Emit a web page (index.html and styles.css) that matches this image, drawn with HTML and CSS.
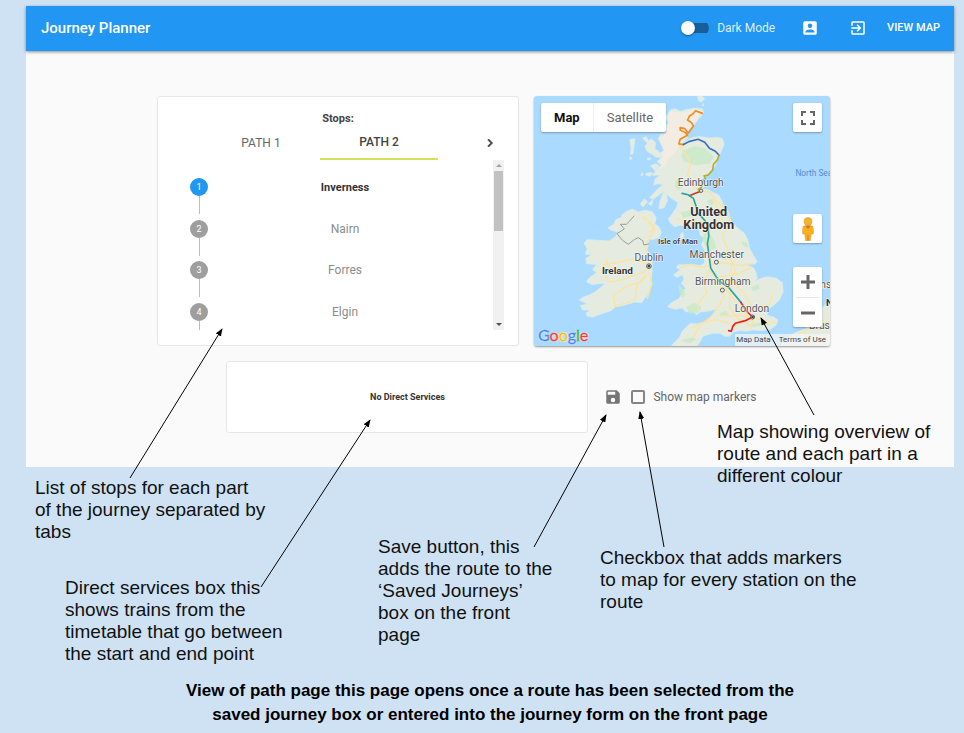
FILE: index.html
```html
<!DOCTYPE html>
<html lang="en">
<head>
<meta charset="utf-8">
<title>Journey Planner</title>
<link rel="stylesheet" href="styles.css">
</head>
<body>
<main class="board">
  <div class="app">
    <header class="bar">
      <h1 class="brand">Journey Planner</h1>
      <label class="dark"><input class="switch" type="checkbox" role="switch">Dark Mode</label>
      <button class="icon-btn" type="button" aria-label="Account">
        <svg viewBox="0 0 24 24" fill="currentColor"><path d="M3 5v14a2 2 0 0 0 2 2h14a2 2 0 0 0 2-2V5a2 2 0 0 0-2-2H5a2 2 0 0 0-2 2zm12 4a3 3 0 1 1-6 0 3 3 0 0 1 6 0zm-9 8c0-2 4-3.100 6-3.100s6 1.100 6 3.100v1H6v-1z"/></svg>
      </button>
      <button class="icon-btn" type="button" aria-label="Sign out">
        <svg viewBox="0 0 24 24" fill="currentColor"><path d="M10.090 15.590 11.500 17l5-5-5-5-1.410 1.410L12.670 11H3v2h9.670l-2.580 2.590zM19 3H5a2 2 0 0 0-2 2v4h2V5h14v14H5v-4H3v4a2 2 0 0 0 2 2h14a2 2 0 0 0 2-2V5a2 2 0 0 0-2-2z"/></svg>
      </button>
      <a class="view-map" href="#map">VIEW MAP</a>
    </header>

    <div class="row row-main">
      <section class="card stops">
        <h2 class="stops-title">Stops:</h2>
        <div class="tabs" role="tablist">
          <button class="tab" type="button" role="tab">PATH 1</button>
          <button class="tab active" type="button" role="tab" aria-selected="true">PATH 2</button>
          <button class="next" type="button" aria-label="Next tab">
            <svg viewBox="0 0 24 24" fill="currentColor" stroke="currentColor"><path d="M8.590 16.590 13.170 12 8.590 7.410 10 6l6 6-6 6z"/></svg>
          </button>
        </div>
        <div class="list-wrap">
          <ol class="list">
            <li class="stop current"><span class="num">1</span><span class="name">Inverness</span></li>
            <li class="stop"><span class="num">2</span><span class="name">Nairn</span></li>
            <li class="stop"><span class="num">3</span><span class="name">Forres</span></li>
            <li class="stop"><span class="num">4</span><span class="name">Elgin</span></li>
          </ol>
          <div class="scroll" aria-hidden="true"><i class="up"></i><i class="thumb"></i><i class="down"></i></div>
        </div>
      </section>

      <section class="map" id="map" aria-label="Route map">
        <svg class="map-art" viewBox="0 0 891 756" preserveAspectRatio="xMidYMid slice">
          <rect width="891" height="756" fill="#aadaff"/>
          <g fill="#e6ebe0" stroke="#d3eef2" stroke-width="2" stroke-linejoin="round">
            <path d="M410 44L425 40 440 48 460 42 484 38 506 40 512 52 500 66 488 80 474 98 460 112 462 128 446 146 462 134 480 126 500 124 530 128 552 126 568 130 572 148 562 172 554 190 546 212 530 232 514 246 498 256 476 262 500 262 520 262 516 272 500 284 520 282 540 292 556 300 566 318 576 350 590 378 612 398 634 416 644 436 650 462 662 484 672 500 664 508 636 508 660 518 668 532 672 550 664 560 684 550 704 546 730 550 748 564 750 590 740 614 724 630 708 642 690 650 704 654 700 662 720 666 734 676 730 690 712 704 686 708 660 706 640 710 620 708 600 712 590 724 576 726 560 716 540 716 524 720 508 726 500 742 490 756 412 756 426 740 438 728 446 710 458 698 470 686 490 688 512 682 524 676 540 656 548 644 520 650 500 652 490 660 476 650 458 652 446 640 424 644 402 636 416 622 436 612 448 592 456 580 444 566 452 552 446 540 430 548 420 540 440 524 428 518 434 510 452 510 474 508 500 512 514 504 512 488 516 470 504 450 512 430 500 420 496 402 476 396 458 396 440 390 424 396 410 384 404 372 416 356 428 338 434 322 420 314 408 306 398 296 402 316 392 338 376 342 378 322 384 304 392 288 376 300 360 312 348 308 362 292 376 278 390 268 372 266 360 270 364 252 380 240 356 240 372 220 384 210 370 200 384 186 376 176 390 166 384 150 374 130 380 118 398 114 394 96 404 82 396 66z"/>
            <path d="M264 360L280 348 296 342 312 350 336 346 356 350 368 368 364 386 376 396 384 412 378 426 360 434 346 434 344 452 340 466 350 480 356 500 356 520 354 546 352 572 346 596 332 612 324 624 304 622 284 628 262 634 246 636 232 648 214 654 196 660 176 668 160 664 156 656 168 646 146 646 140 632 160 628 136 616 150 606 168 600 186 590 200 578 214 568 200 566 174 570 158 560 168 548 188 534 176 524 188 510 158 506 156 490 172 480 154 478 160 460 150 446 160 434 196 436 226 438 246 424 252 412 232 406 222 398 240 388 246 374 264 366z"/>
            <path d="M326 128L338 124 346 138 352 130 366 142 364 162 376 168 384 186 368 186 354 176 340 168 334 152 342 144zM288 132L304 130 302 148 298 176 290 178 292 160zM288 186l6 0 0 6-6 0zM342 188l8 0 0 6-8 0zM350 212L366 206 378 212 364 228 358 218zM322 236l6-4 0 8-6 2zM334 238l10-6 14 2-10 10zM320 326L332 312 342 320 328 336zM344 326L358 314 354 332zM440 418L448 412 452 424 442 434zM492 4L502 0 510 6 514 10 504 20 496 16zM508 24l4 6-6 2z"/>
            <path d="M736 756L760 734 782 716 814 704 842 686 856 664 866 642 880 626 891 620V756zM864 570L891 560V576L864 582z"/>
          </g>
          <path fill="#f3ece2" d="M412 48L440 52 484 42 506 44 482 84 456 112 450 136 436 150 426 172 404 190 394 214 376 222 386 206 376 200 390 184 384 172 394 164 384 146 378 126 400 116 398 98 408 82 400 66z"/>
          <g fill="#c8e8c5" opacity=".8">
            <path d="M448 166l34-14 34 8 24 24-10 20-44 6-34-10-8-16zM426 256l18 4 4 16-14 10-10-12zM512 414l18 4 14 22 4 18-16 10-16-14-10-22zM458 636l24-12 22 12-10 18-26 4zM434 568l18 18 4 16-10 6-8-16zM555 480l16-10 14 12-10 14zM520 318l16-6 6 12-12 8zM440 352l34-6 8 14-32 8zM652 578l24-10 4 14-20 8zM558 656l20-8 8 12-20 6zM442 738l30-10 18 6-20 12zM636 690l60-8 16 8-50 6zM624 438l18 6 4 14-16-4z"/>
          </g>
          <g fill="none" stroke="#fce3a0" stroke-width="4" stroke-linejoin="round">
            <path d="M436 148l24 34 12 26-10 26 10 32 26 20 34 6 18 40 16 34 8 40-6 22 18 40 8 30 12 28-8 30-8 44-2 36 24 34 42 22M470 300l10 46 38 34 6 66 8 54-4 28 30 28 34 46 34 44 32 34M440 518l30-8 40 8 40-14 40 2 32 6 30-6M530 520l-18 40 8 34-26 32-2 24M560 570l12 34-14 28-20 30-36 28-24 40M560 664l50-2 44 6 76 18M594 510l0 50-18 30M594 560l40 36 24 44 50-10 10-30M474 700l40-16 36-10 60 20 44-26M546 550l70-14 40-20M660 670l-8 34M596 390l-12-40-42-40M430 372l30 4 48 4"/>
            <path d="M344 510l-8-50 10-30 14-20-8-26-26-20M340 505l-50-12-40 10-44 8 18 50 40-6 64-22 22-18M340 540l-18 22-44 12-38 28 4 32M340 540l-30 30-6 44-30 12-34 8M345 530l10 36-14 46M225 520l-10-30M344 412l18-6-2-16-18-6"/>
            <path d="M776 728l38-18 30-22 47-6M814 710l14 46M844 688l-4-36M860 650l-14 50"/>
          </g>
          <path d="M302 362l-14 16-10 10-18 0 12 14-22 14 16 20 18 12 18-14 12-6 14 10 2 12 12-2 4-2" fill="none" stroke="#9a9e9c" stroke-width="3"/>
          <g fill="none" stroke-width="5" stroke-linejoin="round" stroke-linecap="round">
            <path stroke="#f48c20" d="M507 54L486 46 478 56 468 62 462 74 474 82 480 92 464 114 454 100 440 97 440 104 456 112 462 120 440 132 436 146 450 148"/>
            <path stroke="#3671bd" d="M450 148l16-9 28-7 20 9 14 18 18 9 11 12"/>
            <path stroke="#b2b02c" d="M557 180L552 194 540 208 538 224 524 240 512 242 516 250 508 258 504 276 494 284"/>
            <path stroke="#c73d26" d="M500 289l-16 6-16 7"/>
            <path stroke="#2aa3a3" d="M446 295L464 299 480 310 488 334 492 352 514 376 524 392 526 424 522 446 532 520 556 558 586 578 623 623"/>
            <path stroke="#ee1c25" d="M623 623L638 648 658 667 636 678 606 686 598 696 594 710 586 708"/>
          </g>
          <g fill="#e7ebe4" stroke="#5d5d5d" stroke-width="3"><circle cx="503" cy="287" r="5"/><circle cx="549" cy="502" r="6"/><circle cx="567" cy="586" r="6"/><circle cx="346" cy="514" r="7"/><circle cx="658" cy="667" r="6"/></g>
          <g fill="#444"><circle cx="346" cy="514" r="4"/><circle cx="658" cy="667" r="4"/></g>
          <g class="labels">
            <text x="502" y="272">Edinburgh</text>
            <text x="346" y="499">Dublin</text>
            <text x="550" y="490">Manchester</text>
            <text x="568" y="571">Birmingham</text>
            <text x="656" y="651">London</text>
            <text class="big" x="526" y="363">United</text>
            <text class="big" x="526" y="403">Kingdom</text>
            <text class="mid" x="251" y="538">Ireland</text>
            <text class="small" x="433" y="447">Isle of Man</text>
            <text class="sea" x="787" y="243">North Sea</text>
            <text class="edge" x="862" y="580">ns</text>
            <text class="mid edge" x="879" y="633">N</text>
            <text class="edge" x="828" y="703">Brus</text>
          </g>
          <path d="M605 718h286v38H605z" fill="#f5f5f5" opacity=".72"/>
        </svg>
        <div class="map-type"><button type="button" class="on">Map</button><button type="button">Satellite</button></div>
        <button class="map-btn full" type="button" aria-label="Full screen"><svg viewBox="0 0 18 18" fill="none" stroke="#666" stroke-width="2"><path d="M3 7V3h4M11 3h4v4M15 11v4h-4M7 15H3v-4"/></svg></button>
        <button class="map-btn person" type="button" aria-label="Street View"><svg viewBox="0 0 28 48"><path d="M4 19q10-6 20 0l1 14-5 2-1 12H9L8 35l-5-2z" fill="#f9b01f" stroke="#d99020"/><circle cx="14" cy="9" r="8" fill="#f5b52d" stroke="#c99534"/><path d="M9 18h10l-5 6z" fill="#e76b25"/><path d="M14 36v11" stroke="#c9801c" stroke-width="2"/></svg></button>
        <div class="zoom"><button type="button" aria-label="Zoom in"><svg viewBox="0 0 14 14" stroke="#666" stroke-width="3"><path d="M7 0v14M0 7h14"/></svg></button><button type="button" aria-label="Zoom out"><svg viewBox="0 0 14 14" stroke="#666" stroke-width="3"><path d="M0 7h14"/></svg></button></div>
        <div class="google"><span class="b">G</span><span class="r">o</span><span class="y">o</span><span class="b">g</span><span class="g">l</span><span class="r">e</span></div>
        <div class="terms"><span>Map Data</span><a href="#map">Terms of Use</a></div>
      </section>
    </div>

    <div class="row row-sub">
      <section class="card services">No Direct Services</section>
      <button class="save" type="button" aria-label="Save route"><svg viewBox="0 0 24 24" fill="currentColor"><path d="M17 3H5a2 2 0 0 0-2 2v14a2 2 0 0 0 2 2h14a2 2 0 0 0 2-2V7l-4-4zm-5 16a3 3 0 1 1 0-6 3 3 0 0 1 0 6zm3-10H5V5h10v4z"/></svg></button>
      <label class="markers"><input class="box" type="checkbox">Show map markers</label>
    </div>
  </div>

  <p class="note n-stops">List of stops for each part<br>of the journey separated by<br>tabs</p>
  <p class="note n-direct">Direct services box this<br>shows trains from the<br>timetable that go between<br>the start and end point</p>
  <p class="note n-save">Save button, this<br>adds the route to the<br>‘Saved Journeys’<br>box on the front<br>page</p>
  <p class="note n-check">Checkbox that adds markers<br>to map for every station on the<br>route</p>
  <p class="note n-map">Map showing overview of<br>route and each part in a<br>different colour</p>

  <svg class="arrows" width="964" height="733" viewBox="0 0 964 733" fill="none" stroke="#000">
    <defs><marker id="tip" markerWidth="8" markerHeight="6" refX="7" refY="3" orient="auto"><path d="M0 0l8 3-8 3z" fill="#000" stroke="none"/></marker></defs>
    <g marker-end="url(#tip)">
      <path d="M130 478L222 329"/>
      <path d="M261 587L370 420"/>
      <path d="M534 547L606 415"/>
      <path d="M664 547L640 412"/>
      <path d="M814 415L761 318"/>
    </g>
  </svg>

  <p class="caption">View of path page this page opens once a route has been selected from the<br>saved journey box or entered into the journey form on the front page</p>
</main>
</body>
</html>
```
FILE: styles.css
```css
* { box-sizing: border-box; }
body { margin: 0; background: #cfe2f3; font-family: Roboto, sans-serif; color: #444; }
button { border: 0; padding: 0; background: none; font: inherit; color: inherit; }
a { color: inherit; text-decoration: none; }
svg { display: block; }
h1, h2, p, ol { margin: 0; padding: 0; }

.board { position: relative; min-height: 733px; padding: 6px 10px 0 26px; }
.app { background: #fafafa; padding-bottom: 34px; }

.bar { display: flex; align-items: center; height: 45px; padding: 0 14px 2px 15px; background: #2196f3; color: #fff; box-shadow: 0 1px 3px rgba(0, 0, 0, .45); }
.brand { font-size: 15px; font-weight: 500; margin-right: auto; }
.dark { display: flex; align-items: center; gap: 8px; font-size: 12px; color: #dceefd; }
.switch { appearance: none; display: flex; align-items: center; width: 28px; height: 14px; margin: 0; background: linear-gradient(#175f9b, #175f9b) right / 22px 10px no-repeat; border-radius: 7px; }
.switch::before { content: ""; width: 14px; height: 14px; border-radius: 50%; background: #fafafa; box-shadow: 0 1px 2px rgba(0, 0, 0, .4); }
.icon-btn { margin-left: 26px; }
.icon-btn + .icon-btn { margin-left: 30px; }
.icon-btn svg { width: 18px; height: 18px; }
.view-map { margin-left: 20px; font-size: 11px; font-weight: 500; }

.row { display: flex; justify-content: center; }
.row-main { gap: 15px; padding: 45px 0 0 7px; }
.row-sub { align-items: center; padding: 15px 0 0 3px; }
.card { flex: none; width: 362px; background: #fff; border: 1px solid #e7e7e7; border-radius: 3px; }

.stops { height: 250px; padding: 14px 14px 0; }
.stops-title { font-size: 11px; line-height: 15px; font-weight: 700; text-align: center; }
.tabs { display: flex; padding-left: 30px; height: 34px; }
.tab { width: 118px; font-size: 12px; font-weight: 400; color: #666; }
.tab.active { color: #444; font-weight: 500; border-bottom: 2px solid #d4e157; }
.next { margin: 0 6px 0 auto; }
.next svg { width: 16px; height: 16px; }
.list-wrap { display: flex; height: 170px; }
.list { flex: 1; list-style: none; padding-top: 18px; overflow: hidden; }
.stop { position: relative; display: flex; align-items: center; height: 18px; margin-bottom: 24px; padding-left: 18px; font-size: 12px; color: #8c8c8c; }
.stop:nth-child(even) { margin-bottom: 23px; }
.stop::after { content: ""; position: absolute; left: 27px; top: 18px; width: 1px; height: 18px; background: #bdbdbd; }
.num { flex: none; width: 18px; height: 18px; border-radius: 50%; background: #9e9e9e; color: #fff; font-size: 9px; line-height: 18px; text-align: center; }
.name { flex: 1; padding-right: 18px; text-align: center; margin-left: 7px; }
.current { color: #333; font-size: 11px; font-weight: 700; }
.current .num { background: #2196f3; font-weight: 400; }
.scroll { display: flex; flex-direction: column; align-items: center; width: 11px; background: #f1f1f1; }
.up, .down { border: 3px solid transparent; }
.up { border-bottom-color: #a3a3a3; margin: 1px 0 4px; }
.thumb { width: 9px; height: 60px; background: #c1c1c1; }
.down { border-top-color: #505050; margin: auto 0 1px; }

.map { position: relative; flex: none; width: 296px; height: 250px; overflow: hidden; border-radius: 3px; box-shadow: 0 1px 2px rgba(0, 0, 0, .4); }
.map-art { width: 100%; height: 100%; }
.labels { font-size: 31px; text-anchor: middle; fill: #555; stroke: #fff; stroke-width: 3px; stroke-opacity: .8; paint-order: stroke; }
.labels .big { font-size: 38px; font-weight: 700; fill: #333; }
.labels .mid { font-size: 30px; font-weight: 700; fill: #333; }
.labels .small { font-size: 24px; font-weight: 700; fill: #444; }
.labels .edge { text-anchor: start; }
.labels .sea { font-size: 25px; text-anchor: start; fill: #568bd0; stroke: none; }
.map-type { position: absolute; left: 7px; top: 7px; display: flex; height: 29px; background: #fff; border-radius: 2px; font-size: 13px; color: #666; box-shadow: 0 1px 2px rgba(0, 0, 0, .3); }
.map-type button { padding: 0 13px; }
.map-type .on { color: #111; font-weight: 700; border-right: 1px solid #eee; }
.map-btn, .zoom { position: absolute; right: 8px; width: 29px; background: #fff; border-radius: 2px; box-shadow: 0 1px 2px rgba(0, 0, 0, .3); }
.map-btn { display: grid; place-items: center; height: 29px; }
.full { top: 7px; }
.full svg { width: 18px; height: 18px; }
.person { top: 118px; }
.person svg { width: 14px; height: 24px; }
.zoom { top: 171px; height: 60px; padding: 0 3px; }
.zoom button { display: grid; place-items: center; width: 100%; height: 30px; }
.zoom button + button { border-top: 1px solid #e6e6e6; }
.zoom svg { width: 14px; height: 14px; }
.google { position: absolute; left: 4px; bottom: 2px; font: 16px/18px Lato, sans-serif; text-shadow: 0 0 2px #fff, 0 0 2px #fff; -webkit-text-stroke: 1px currentColor; paint-order: stroke; }
.b { color: #4285f4; } .r { color: #ea4335; } .y { color: #fbbc05; } .g { color: #34a853; }
.terms { position: absolute; right: 4px; bottom: 1px; display: flex; gap: 8px; font-size: 8px; line-height: 11px; color: #444; }

.services { display: grid; place-items: center; height: 72px; font-size: 9px; font-weight: 700; color: #333; }
.save { margin-left: 16px; color: #757575; }
.save svg { width: 18px; height: 18px; }
.markers { display: flex; align-items: center; gap: 8px; margin-left: 9px; font-size: 12px; color: #666; }
.box { appearance: none; width: 14px; height: 14px; margin: 0; border: 2px solid #858585; border-radius: 2px; }

.note { position: absolute; font: 19px/22px "Liberation Sans", sans-serif; color: #111; white-space: nowrap; }
.n-stops { left: 35px; top: 477px; }
.n-direct { left: 65px; top: 577px; }
.n-save { left: 378px; top: 536px; }
.n-check { left: 600px; top: 547px; }
.n-map { left: 717px; top: 421px; }
.arrows { position: absolute; left: 0; top: 0; pointer-events: none; }
.caption { margin-top: 212px; text-align: center; font: 700 17px/24px "Liberation Sans", sans-serif; color: #000; }
```
